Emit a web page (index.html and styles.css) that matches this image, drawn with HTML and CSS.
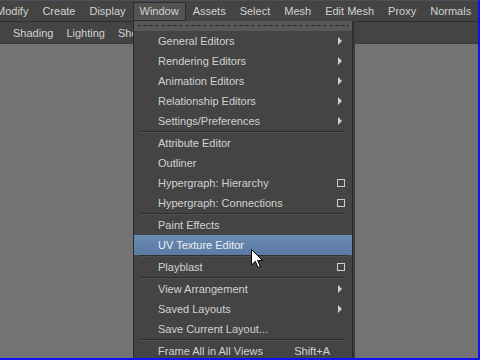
FILE: index.html
```html
<!DOCTYPE html>
<html>
<head>
    <title>Window Menu</title>
    <link rel="stylesheet" href="styles.css">
</head>
<body>

    <div class="screen">
        <div class="menubar">
            <span class="menu-title first">Modify</span>
            <span class="menu-title">Create</span>
            <span class="menu-title">Display</span>
            <span class="menu-title open">Window</span>
            <span class="menu-title">Assets</span>
            <span class="menu-title">Select</span>
            <span class="menu-title">Mesh</span>
            <span class="menu-title">Edit Mesh</span>
            <span class="menu-title">Proxy</span>
            <span class="menu-title">Normals</span>
        </div>

        <div class="toolbar">
            <span class="tool">Shading</span>
            <span class="tool">Lighting</span>
            <span class="tool">Show</span>
        </div>

        <div class="viewport"></div>

        <div class="dropdown">
            <div class="tearoff"><div class="dashes"></div></div>

            <div class="item">General Editors <span class="arrow"></span></div>
            <div class="item">Rendering Editors <span class="arrow"></span></div>
            <div class="item">Animation Editors <span class="arrow"></span></div>
            <div class="item">Relationship Editors <span class="arrow"></span></div>
            <div class="item">Settings/Preferences <span class="arrow"></span></div>
            <div class="sep"></div>
            <div class="item">Attribute Editor</div>
            <div class="item">Outliner</div>
            <div class="item">Hypergraph: Hierarchy <span class="box"></span></div>
            <div class="item">Hypergraph: Connections <span class="box"></span></div>
            <div class="sep"></div>
            <div class="item">Paint Effects</div>
            <div class="item active">UV Texture Editor</div>
            <div class="sep"></div>
            <div class="item">Playblast <span class="box"></span></div>
            <div class="sep"></div>
            <div class="item">View Arrangement <span class="arrow"></span></div>
            <div class="item">Saved Layouts <span class="arrow"></span></div>
            <div class="item">Save Current Layout...</div>
            <div class="sep"></div>
            <div class="item">Frame All in All Views <span class="shortcut">Shift+A</span></div>
        </div>

        <!-- mouse pointer over the highlighted row -->
        <svg class="cursor" width="13" height="20" viewBox="0 0 13 20">
            <path d="M0.5 0.5 L0.5 16 L4.3 12.3 L7 18.5 L9.3 17.5 L6.7 11.5 L11.5 11.5 Z" fill="#fff" stroke="#000" stroke-width="1"/>
        </svg>
    </div>

</body>
</html>
```

FILE: styles.css
```css
html, body {
    margin: 0;
    padding: 0;
}

body {
    font-family: "Liberation Sans", Arial, sans-serif;
    font-size: 11px;
    color: #d2d2d2;
}

.screen {
    position: relative;
    width: 478px;
    height: 358px;
    border-right: 2px solid #1010f0;
    border-bottom: 2px solid #1010f0;
    background: #737373;
    overflow: hidden;
    display: flex;
    flex-direction: column;
}

.menubar {
    height: 22px;
    box-sizing: border-box;
    background: #444;
    border-top: 1px solid #4b505c;
    border-bottom: 1px solid #2c2c2c;
    display: flex;
    align-items: center;
    margin-left: -11px;
}

.menu-title {
    padding: 2px 6px 3px;
    border: 1px solid transparent;
    white-space: nowrap;
}

.menu-title.open {
    background: #535353;
    border-color: #2e2e2e;
}

.toolbar {
    height: 21px;
    background: #444;
    border-bottom: 1px solid #3a3a3a;
    display: flex;
    align-items: center;
    gap: 13px;
    padding-left: 13px;
}

.viewport {
    flex: 1;
    background: #737373;
}

.dropdown {
    position: absolute;
    left: 133px;
    top: 21px;
    width: 218px;
    height: 345px;
    background: #444;
    border-left: 1px solid #2a2a2a;
    border-right: 1px solid #2a2a2a;
    box-shadow: 2px 0 0 #3a3a3a;
}

.tearoff {
    height: 10px;
    background: #585858;
    padding-top: 4px;
    box-sizing: border-box;
}

.dashes {
    height: 1px;
    margin: 0 3px;
    background: repeating-linear-gradient(90deg, #2a2a2a 0 4px, transparent 4px 6px);
}

.item {
    height: 20px;
    display: flex;
    align-items: center;
    justify-content: space-between;
    padding: 0 7px 0 24px;
    white-space: nowrap;
}

.item.active {
    background: linear-gradient(#6a8bb4, #5a7aa3);
    color: #f0f0f0;
}

.sep {
    height: 0;
    margin: 0 6px;
    border-top: 1px solid #2f2f2f;
    border-bottom: 1px solid #505050;
}

.arrow {
    width: 0;
    height: 0;
    margin-right: 3px;
    border-top: 4px solid transparent;
    border-bottom: 4px solid transparent;
    border-left: 4px solid #cfcfcf;
}

.box {
    width: 6px;
    height: 6px;
    border: 1px solid #cfcfcf;
}

.shortcut {
    margin-right: 15px;
}

.cursor {
    position: absolute;
    left: 251px;
    top: 249px;
}
```
